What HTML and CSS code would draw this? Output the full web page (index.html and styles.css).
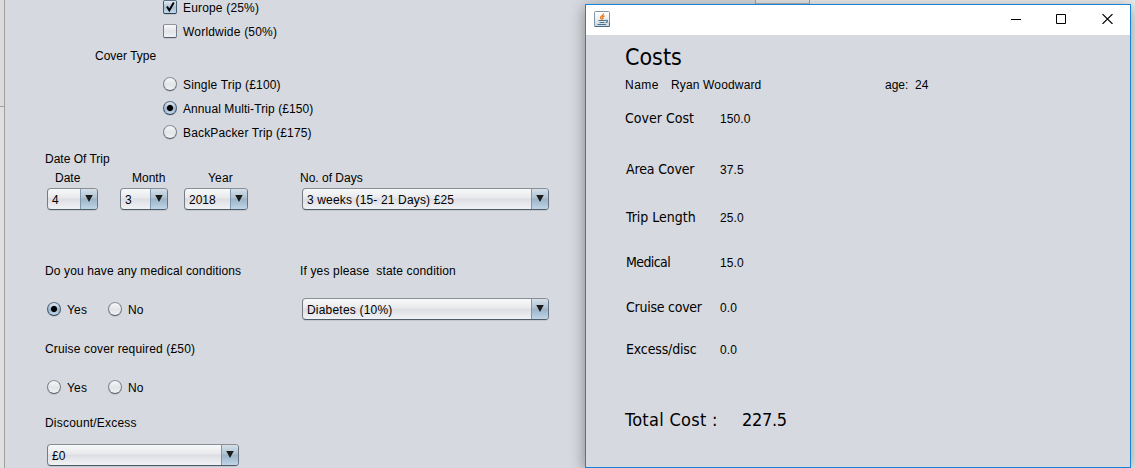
FILE: index.html
```html
<!DOCTYPE html>
<html lang="en">
<head>
<meta charset="utf-8">
<title>Costs</title>
<link rel="stylesheet" href="styles.css">
</head>
<body>
<div class="desktop">
  <div class="gutter"><div class="gutter-top"></div></div>
  <form class="quote">
    <div class="row choice"><span class="check on"><svg width="12" height="12" viewBox="0 0 12 12"><path d="M3 5.500L5.300 9.300L9.800 1.500" fill="none" stroke="#000" stroke-width="1.900"/></svg></span><span class="text t-europe">Europe (25%)</span></div>
    <div class="row choice"><span class="check"></span><span class="text t-world">Worldwide (50%)</span></div>
    <div class="row cover-title"><span class="t-cover">Cover Type</span></div>
    <div class="row choice"><span class="radio"></span><span class="text t-single">Single Trip (£100)</span></div>
    <div class="row choice"><span class="radio on"></span><span class="text t-annual">Annual Multi-Trip (£150)</span></div>
    <div class="row choice"><span class="radio"></span><span class="text t-back">BackPacker Trip (£175)</span></div>
    <div class="row trip-title"><span class="t-trip">Date Of Trip</span></div>
    <div class="row date-labels"><span class="t-date">Date</span><span class="t-month">Month</span><span class="t-year">Year</span><span class="t-days">No. of Days</span></div>
    <div class="row date-fields">
      <div class="combo date"><span class="value">4</span><span class="arrow"></span></div>
      <div class="combo month"><span class="value">3</span><span class="arrow"></span></div>
      <div class="combo year"><span class="value t-2018">2018</span><span class="arrow"></span></div>
      <div class="combo wide"><span class="value t-weeks">3 weeks (15- 21 Days) £25</span><span class="arrow"></span></div>
    </div>
    <div class="row medical-title"><span class="question t-medical">Do you have any medical conditions</span><span class="t-state">If yes please&nbsp; state condition</span></div>
    <div class="row medical-fields">
      <div class="yesno"><span class="radio on"></span><span class="text yes">Yes</span><span class="radio"></span><span class="text">No</span></div>
      <div class="combo wide"><span class="value t-diabetes">Diabetes (10%)</span><span class="arrow"></span></div>
    </div>
    <div class="row cruise-title"><span class="t-cruise">Cruise cover required (£50)</span></div>
    <div class="row cruise-fields"><div class="yesno"><span class="radio"></span><span class="text yes">Yes</span><span class="radio"></span><span class="text">No</span></div></div>
    <div class="row discount-title"><span class="t-discount">Discount/Excess</span></div>
    <div class="row discount-field"><div class="combo discount"><span class="value">£0</span><span class="arrow"></span></div></div>
  </form>
  <div class="backdrop"><div class="back-tab"></div></div>
</div>

<section class="dialog">
  <header class="titlebar">
    <svg class="java" width="16" height="16" viewBox="0 0 16 16">
      <defs><linearGradient id="jg" x2="0" y2="1"><stop offset="0" stop-color="#fff"/><stop offset=".55" stop-color="#e9eef2"/><stop offset="1" stop-color="#c6d5df"/></linearGradient></defs>
      <rect x=".5" y=".5" width="15" height="15" rx="1" fill="url(#jg)" stroke="#8195a5"/>
      <path d="M.5 15.5h15v-4" fill="none" stroke="#506b81"/>
      <path d="M9.500 2.500C10 4.500 6 5 6.500 7C6.700 8 7.500 8 7.800 8.500M10.500 5C8.500 5.500 8 6.500 9 7.500L8.300 8.500" fill="none" stroke="#e8791c" stroke-width="1.300"/>
      <path d="M4.500 9.500h6.500M5.500 11.500h5M3.500 13.500h8.500M11 9.500c3.500-1 3 2 .5 2" fill="none" stroke="#49738f" stroke-width="1.100"/>
    </svg>
    <svg class="controls" width="102" height="10" viewBox="0 0 102 10">
      <path d="M0 5.500h10M45.500 .5h9v9h-9z" fill="none" stroke="#000"/>
      <path d="M91.500 0l10 10M101.500 0l-10 10" fill="none" stroke="#000" stroke-width="1.100"/>
    </svg>
  </header>
  <div class="content">
    <h1 class="costs">Costs</h1>
    <div class="person"><span class="name">Name</span><span class="fullname">Ryan Woodward</span><span class="age">age:</span><span>24</span></div>
    <div class="cost c1"><span class="label l1">Cover Cost</span><span class="amount">150.0</span></div>
    <div class="cost c2"><span class="label l2">Area Cover</span><span class="amount">37.5</span></div>
    <div class="cost c3"><span class="label l3">Trip Length</span><span class="amount">25.0</span></div>
    <div class="cost c4"><span class="label l4">Medical</span><span class="amount">15.0</span></div>
    <div class="cost c5"><span class="label l5">Cruise cover</span><span class="amount">0.0</span></div>
    <div class="cost c6"><span class="label l6">Excess/disc</span><span class="amount">0.0</span></div>
    <div class="total"><span class="total-label">Total Cost :</span><span class="total-value">227.5</span></div>
  </div>
</section>
</body>
</html>
```

FILE: styles.css
```css
* { box-sizing: border-box; }
body {
  margin: 0;
  width: 1135px;
  height: 468px;
  overflow: hidden;
  position: relative;
  background: #ededed;
  color: #000;
  font: 12px "Liberation Sans", Arial, sans-serif;
  white-space: nowrap;
}
.desktop { display: flex; height: 468px; }
.gutter { width: 5px; border-right: 1px solid #a0a0a0; background: #e0e0e0; }
.gutter-top { height: 107px; border-bottom: 1px solid #a0a0a0; background: #dcdcdc; }
.quote { width: 750px; height: 468px; overflow: hidden; background: #d6d9df; }
.backdrop { flex: 1; border-left: 1px solid #a0a0a0; background: #ededed; }
.back-tab { width: 54px; height: 4px; border-right: 1px solid #a0a0a0; border-bottom: 1px solid #b8b8b8; background: #e7e7e7; }

.row { display: flex; align-items: center; height: 20px; padding-left: 40px; }
.row.choice { height: 24px; padding-left: 158px; gap: 6px; }
.row.choice:first-child { margin-top: -5px; }
.row.cover-title { height: 26px; padding-left: 90px; margin-bottom: 3px; }
.row.trip-title { margin-top: 4px; height: 22px; }
.row.date-labels { padding-left: 50px; height: 16px; }
.t-date { width: 77px; }
.t-month { width: 76px; }
.t-year { width: 92px; letter-spacing: .2px; }
.row.date-fields { height: 22px; margin-top: 2px; padding-left: 42px; }
.row.medical-title { margin-top: 51px; }
.question { width: 255px; }
.row.medical-fields { height: 22px; margin-top: 17px; padding-left: 42px; }
.row.cruise-title { margin-top: 19px; }
.row.cruise-fields { height: 22px; margin-top: 17px; padding-left: 42px; }
.row.discount-title { margin-top: 15px; }
.row.discount-field { height: 22px; margin-top: 11px; padding-left: 42px; }
.text { padding-top: 2px; }

.t-europe, .t-single { letter-spacing: .17px; }
.t-world, .t-discount, .t-diabetes { letter-spacing: .2px; }
.t-annual { letter-spacing: .09px; }
.t-back, .t-state, .t-cruise, .t-weeks { letter-spacing: .15px; }
.t-medical { letter-spacing: .12px; }

.yesno { display: flex; align-items: center; width: 255px; gap: 6px; }
.yes { width: 35px; }
.yesno .text { letter-spacing: .2px; }
.radio, .check { flex: none; width: 14px; height: 14px; background: linear-gradient(#f8f8fa, #e2e4e8 55%, #f2f3f6); }
.radio { border-radius: 50%; border: 1px solid; border-color: #90949b #777c85 #555c67; box-shadow: 0 1px 0 #c3c6cc; }
.radio.on { background: radial-gradient(circle at 50% 50%, #000 0 2.600px, transparent 3.600px), linear-gradient(#e3eaf1, #9eb6cc 55%, #c5d9eb); border-color: #5b7187 #435a71 #243c53; }
.check { border-radius: 2px; border: 1px solid; border-color: #90949b #777c85 #555c67; box-shadow: 0 1px 0 #c3c6cc; }
.check.on { background: linear-gradient(#e3eaf1, #a9bfd2 55%, #c5d9eb); border-color: #5b7187 #435a71 #243c53; }
.check svg { display: block; }

.combo {
  display: flex;
  height: 22px;
  flex: none;
  overflow: hidden;
  border: 1px solid;
  border-color: #898d94 #687482 #505b68 #777c84;
  border-radius: 4px;
  background: linear-gradient(#f8f9fa, #e7e9ec 45%, #dcdee3 50%, #f0f2f6);
  box-shadow: 0 1px 0 #c3c6cc;
}
.value { flex: 1; padding: 1px 0 0 4px; line-height: 20px; }
.arrow { display: flex; justify-content: center; align-items: center; width: 17px; padding-bottom: 1px; border-left: 1px solid #8098ad; background: linear-gradient(#d5e0e9, #afc2d2 45%, #9db3c7 50%, #bfd5e8); }
.arrow::before { content: ""; width: 8px; height: 7px; background: #1b1b1b; clip-path: polygon(3% 0, 97% 0, 50% 100%); }
.combo.date { width: 51px; margin-right: 22px; }
.combo.month { width: 48px; margin-right: 16px; }
.combo.year { width: 64px; margin-right: 54px; }
.combo.wide { width: 247px; }
.combo.discount { width: 192px; }

.dialog {
  position: absolute;
  left: 585px;
  top: 4px;
  width: 546px;
  height: 464px;
  border: 1px solid #1883d7;
  background: #d6d9df;
  box-shadow: 0 3px 14px rgba(0, 0, 0, .4);
}
.titlebar { display: flex; justify-content: space-between; height: 30px; background: #fff; padding: 6px 17px 0 8px; }
.controls { margin-top: 3px; }
.content { padding-left: 39px; }
.costs { margin: 0; padding-top: 6px; height: 40px; font: 23px/32px "DejaVu Sans Condensed", "DejaVu Sans", sans-serif; font-stretch: condensed; }
.person { display: flex; height: 20px; line-height: 20px; }
.name { width: 46px; letter-spacing: .5px; }
.fullname { width: 214px; letter-spacing: .15px; }
.age { width: 30px; }
.cost { display: flex; align-items: center; height: 20px; }
.label { width: 95px; font: 14px "DejaVu Sans Condensed", "DejaVu Sans", sans-serif; font-stretch: condensed; }
.l2, .l3, .l4, .l5, .l6 { padding-left: 1px; }
.l2, .l6 { letter-spacing: -.15px; }
.l4 { letter-spacing: -.6px; }
.l5 { letter-spacing: -.25px; }
.amount { padding-top: 2px; letter-spacing: .1px; }
.c1 { margin-top: 13px; }
.c2 { margin-top: 31px; }
.c3 { margin-top: 28px; }
.c4 { margin-top: 25px; }
.c5 { margin-top: 25px; }
.c6 { margin-top: 22px; }
.total { display: flex; margin-top: 49px; height: 24px; line-height: 24px; font-family: "DejaVu Sans Condensed", "DejaVu Sans", sans-serif; font-size: 18px; font-stretch: condensed; }
.total-label { width: 117px; letter-spacing: .3px; }
.total-value { letter-spacing: -.3px; }
```
